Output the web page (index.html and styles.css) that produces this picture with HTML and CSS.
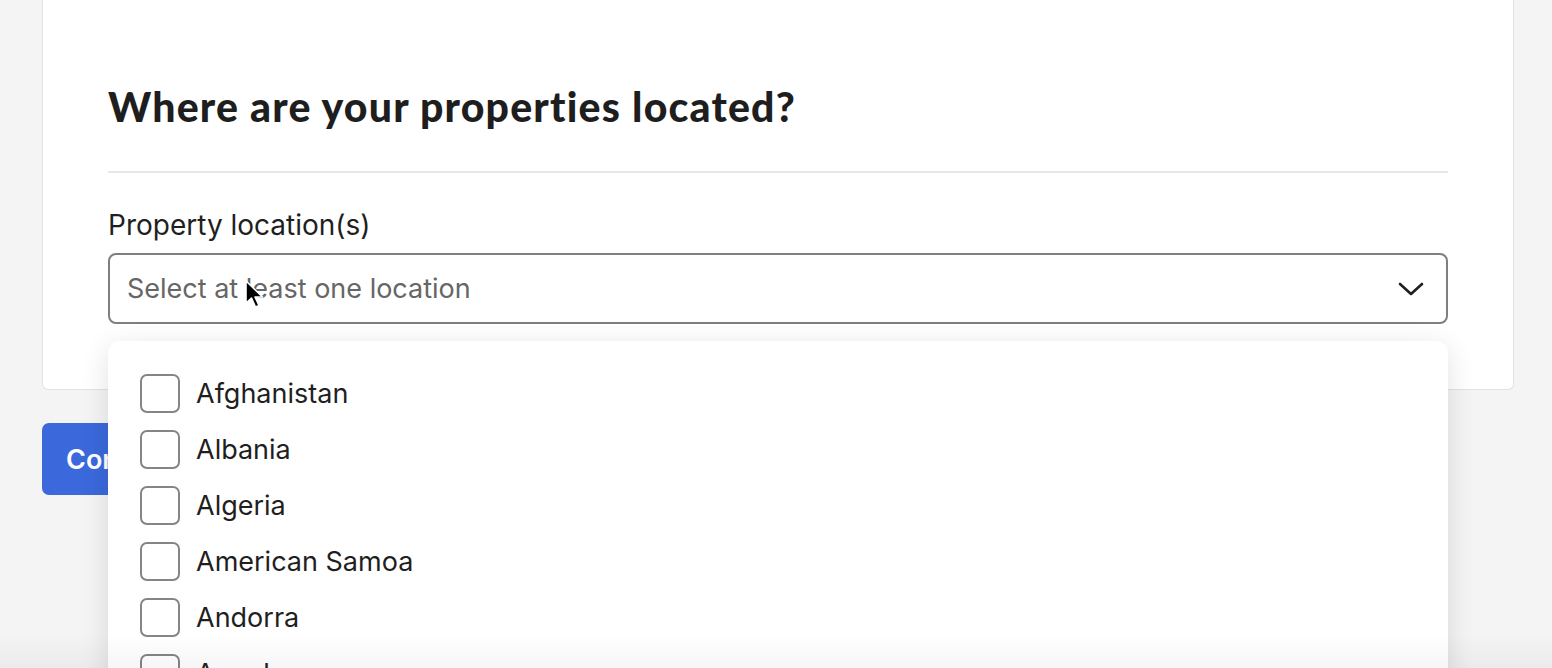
FILE: index.html
```html
<!DOCTYPE html>
<html lang="en">
<head>
<meta charset="utf-8">
<title>Property location</title>
<link rel="stylesheet" href="styles.css">
</head>
<body>
<main class="page">
  <section class="card">
    <h1 class="title">Where are your properties located?</h1>
    <hr class="divider">
    <div class="field">
      <label class="label">Property location(s)</label>
      <div class="select">
        <span class="placeholder">Select at least one location</span>
        <svg class="chevron" width="26" height="16" viewBox="0 0 26 16"><path d="M2 3 L13 13 L24 3" fill="none" stroke="#1f1f1f" stroke-width="2.6" stroke-linecap="round" stroke-linejoin="round"/></svg>
      </div>
      <ul class="menu">
        <li class="option"><span class="box"></span><span>Afghanistan</span></li>
        <li class="option"><span class="box"></span><span>Albania</span></li>
        <li class="option"><span class="box"></span><span>Algeria</span></li>
        <li class="option"><span class="box"></span><span>American Samoa</span></li>
        <li class="option"><span class="box"></span><span>Andorra</span></li>
        <li class="option"><span class="box"></span><span>Angola</span></li>
      </ul>
    </div>
  </section>
  <div class="actions">
    <button class="btn">Continue</button>
  </div>
</main>
<div class="fade"></div>
<svg class="cursor" width="22" height="32" viewBox="0 0 22 32"><path d="M2 2 L2 24 L7.5 19 L11.5 28 L15 26.5 L11 18 L18.5 18 Z" fill="#000" stroke="#fff" stroke-width="1.6" stroke-linejoin="round"/></svg>
</body>
</html>
```
FILE: styles.css
```css
* { box-sizing: border-box; }
html, body { margin: 0; padding: 0; height: 100%; overflow: hidden; }
body {
  background: #f4f4f4;
  font-family: Inter, "Noto Sans", sans-serif;
  color: #1f1f1f;
}
.page {
  margin-left: 42px;
  width: 1472px;
}
.card {
  background: #fff;
  border: 1px solid #e2e2e2;
  border-top: none;
  border-radius: 0 0 6px 6px;
  padding: 83px 65px 65px 65px;
}
.title {
  margin: 0;
  font-family: Lato, sans-serif;
  font-weight: 900;
  font-size: 41px;
  line-height: 48px;
  color: #1e1e1e;
  letter-spacing: 1.2px;
}
.divider {
  margin: 40px 0 0 0;
  border: none;
  height: 2px;
  background: #e7e7e7;
}
.field {
  position: relative;
  padding-top: 35px;
}
.label {
  display: block;
  font-size: 28px;
  line-height: 34px;
  color: #1f1f1f;
  margin-bottom: 11px;
}
.select {
  height: 71px;
  border: 2px solid #7f7f7f;
  border-radius: 8px;
  display: flex;
  align-items: center;
  justify-content: space-between;
  padding: 0 22px 0 17px;
  background: #fff;
}
.placeholder {
  font-size: 27px;
  color: #666;
}
.chevron { display: block; }
.menu {
  position: absolute;
  left: 0;
  right: 0;
  top: 168px;
  height: 400px;
  margin: 0;
  list-style: none;
  padding: 24px 32px;
  background: #fff;
  border-radius: 12px;
  box-shadow: 0 6px 28px rgba(0, 0, 0, 0.12);
  z-index: 2;
}
.option {
  display: flex;
  align-items: center;
  gap: 16px;
  height: 56px;
  font-size: 27px;
  color: #1f1f1f;
}
.box {
  width: 40px;
  height: 39px;
  border: 2px solid #858585;
  border-radius: 7px;
  flex: none;
}
.actions { padding-top: 33px; }
.btn {
  height: 72px;
  padding: 0 24px;
  border: none;
  border-radius: 7px;
  background: #3b69dc;
  color: #fff;
  font-family: Inter, sans-serif;
  font-weight: 600;
  font-size: 27px;
}
.fade {
  position: fixed;
  left: 0;
  right: 0;
  bottom: 0;
  height: 34px;
  background: linear-gradient(rgba(0,0,0,0), rgba(0,0,0,0.035));
  z-index: 5;
  pointer-events: none;
}
.cursor {
  position: fixed;
  left: 244px;
  top: 279px;
  z-index: 6;
}
```
